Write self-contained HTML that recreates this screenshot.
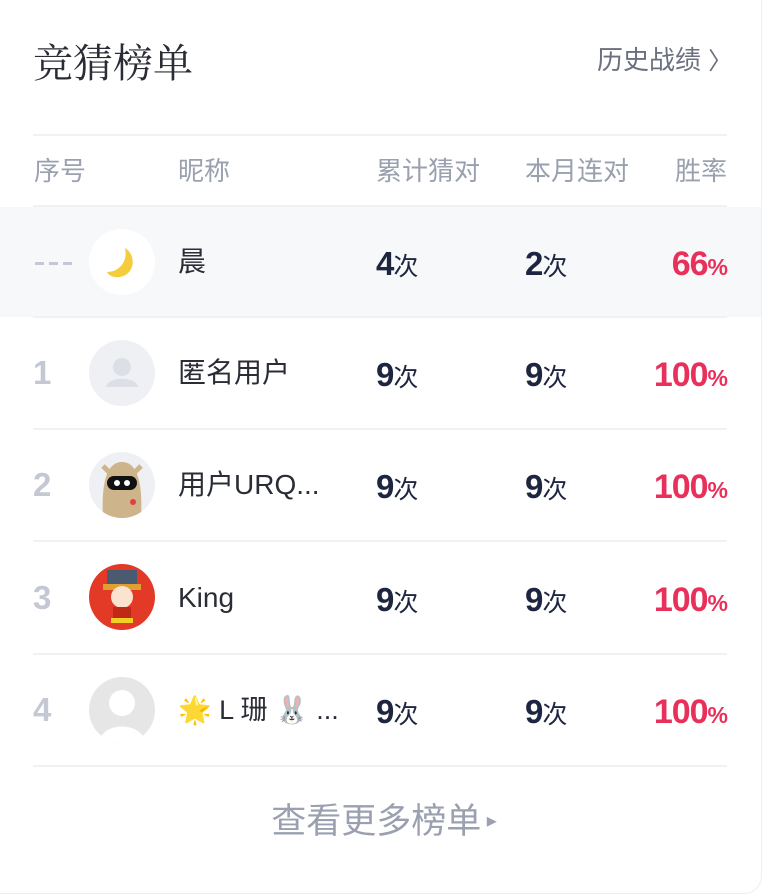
<!DOCTYPE html>
<html><head><meta charset="utf-8"><style>
*{margin:0;padding:0;box-sizing:border-box}
body{width:768px;height:876px;background:#fff;font-family:"Liberation Sans","Noto Sans CJK SC",sans-serif;position:relative;overflow:hidden}
.card{position:absolute;left:-20px;top:-20px;width:782px;height:914px;background:#fff;border-radius:18px;border:1px solid #eceef2}
.abs{position:absolute}
.title{left:33px;top:34px;font-family:"Noto Serif CJK SC",serif;font-size:40px;color:#2a2d35;line-height:54px}
.hist{left:597px;top:43px;font-size:26px;color:#6b7080;line-height:34px}
.line{left:33px;width:694px;height:2px;background:#f0f1f4}
.hd{top:154px;font-size:26px;color:#9aa0ae;line-height:34px}
.hl{left:0;top:207px;width:761px;height:110px;background:#f7f8fa}
.av{left:89px;width:66px;height:66px;border-radius:50%;overflow:hidden}
.rk{left:33px;font-size:33px;font-weight:bold;color:#c4c8d4;line-height:40px}
.nm{left:178px;font-size:28px;color:#2a2d35;line-height:40px}
.n{font-size:33px;font-weight:bold;color:#1e2540;line-height:40px;letter-spacing:-1px}
.n small{font-size:25px;font-weight:normal}
.p{right:41px;font-size:34px;font-weight:bold;color:#e8305a;line-height:40px;letter-spacing:-1px}
.p small{font-size:23px}
.more{left:0;width:768px;top:799px;text-align:center;font-size:35px;color:#9aa0b0;line-height:46px}
</style></head><body>
<div class="card"></div>
<div class="abs title">竞猜榜单</div>
<div class="abs hist">历史战绩 <span style="font-family:'DejaVu Sans';font-size:24px">〉</span></div>
<div class="abs line" style="top:134px"></div>
<div class="abs hd" style="left:34px">序号</div>
<div class="abs hd" style="left:178px">昵称</div>
<div class="abs hd" style="left:376px">累计猜对</div>
<div class="abs hd" style="left:525px">本月连对</div>
<div class="abs hd" style="right:41px">胜率</div>
<div class="abs line" style="top:205px"></div>
<div class="abs hl"></div>
<!-- row 0 -->
<div class="abs" style="left:35px;top:262px;width:38px;height:3px;background:repeating-linear-gradient(90deg,#c4c8d4 0 9px,transparent 9px 14px)"></div>
<div class="abs av" style="top:229px;background:#fff"><svg width="66" height="66"><path d="M36 19 C47 25 47 45 31 48 C24 49 19 46 18 43 C30 43 39 33 36 19Z" fill="#f5cd3c"/></svg></div>
<div class="abs nm" style="top:242px">晨</div>
<div class="abs n" style="left:376px;top:244px">4<small>次</small></div>
<div class="abs n" style="left:525px;top:244px">2<small>次</small></div>
<div class="abs p" style="top:244px">66<small>%</small></div>
<div class="abs line" style="top:316px"></div>
<!-- row1 -->
<div class="abs rk" style="top:353px">1</div>
<div class="abs av" style="top:340px;background:#eef0f4"><svg width="66" height="66"><circle cx="33" cy="27" r="9" fill="#dcdfe6"/><path d="M17 47 C19 36 47 36 49 47Z" fill="#dcdfe6"/></svg></div>
<div class="abs nm" style="top:353px">匿名用户</div>
<div class="abs n" style="left:376px;top:355px">9<small>次</small></div>
<div class="abs n" style="left:525px;top:355px">9<small>次</small></div>
<div class="abs p" style="top:355px">100<small>%</small></div>
<div class="abs line" style="top:428px"></div>
<!-- row2 -->
<div class="abs rk" style="top:465px">2</div>
<div class="abs av" style="top:452px;background:#eef0f4"><svg width="66" height="66"><path d="M14 66 C12 30 18 10 33 10 C48 10 54 30 52 66Z" fill="#cdb48a"/><path d="M14 14 L20 20 M52 14 L46 20" stroke="#cdb48a" stroke-width="5"/><rect x="18" y="24" width="30" height="14" rx="7" fill="#111"/><circle cx="28" cy="31" r="3" fill="#fff"/><circle cx="38" cy="31" r="3" fill="#fff"/><circle cx="44" cy="50" r="3" fill="#e04040"/></svg></div>
<div class="abs nm" style="top:465px">用户URQ...</div>
<div class="abs n" style="left:376px;top:467px">9<small>次</small></div>
<div class="abs n" style="left:525px;top:467px">9<small>次</small></div>
<div class="abs p" style="top:467px">100<small>%</small></div>
<div class="abs line" style="top:540px"></div>
<!-- row3 -->
<div class="abs rk" style="top:578px">3</div>
<div class="abs av" style="top:564px;background:#e23a26"><svg width="66" height="66"><rect x="18" y="6" width="30" height="16" fill="#4a5a70"/><rect x="14" y="20" width="38" height="6" fill="#e0a030"/><circle cx="33" cy="33" r="11" fill="#fbe3cf"/><rect x="24" y="43" width="18" height="12" fill="#c02818"/><rect x="22" y="54" width="22" height="5" fill="#f0d020"/></svg></div>
<div class="abs nm" style="top:578px">King</div>
<div class="abs n" style="left:376px;top:580px">9<small>次</small></div>
<div class="abs n" style="left:525px;top:580px">9<small>次</small></div>
<div class="abs p" style="top:580px">100<small>%</small></div>
<div class="abs line" style="top:653px"></div>
<!-- row4 -->
<div class="abs rk" style="top:690px">4</div>
<div class="abs av" style="top:677px;background:#e6e6e6"><svg width="66" height="66"><circle cx="33" cy="26" r="13" fill="#fff"/><path d="M10 66 C12 44 54 44 56 66Z" fill="#fff"/></svg></div>
<div class="abs nm" style="top:690px;font-size:27px">🌟 L 珊 🐰 ...</div>
<div class="abs n" style="left:376px;top:692px">9<small>次</small></div>
<div class="abs n" style="left:525px;top:692px">9<small>次</small></div>
<div class="abs p" style="top:692px">100<small>%</small></div>
<div class="abs line" style="top:765px"></div>
<div class="abs more">查看更多榜单<span style="font-size:20px;position:relative;top:-6px"> ▸</span></div>
</body></html>
